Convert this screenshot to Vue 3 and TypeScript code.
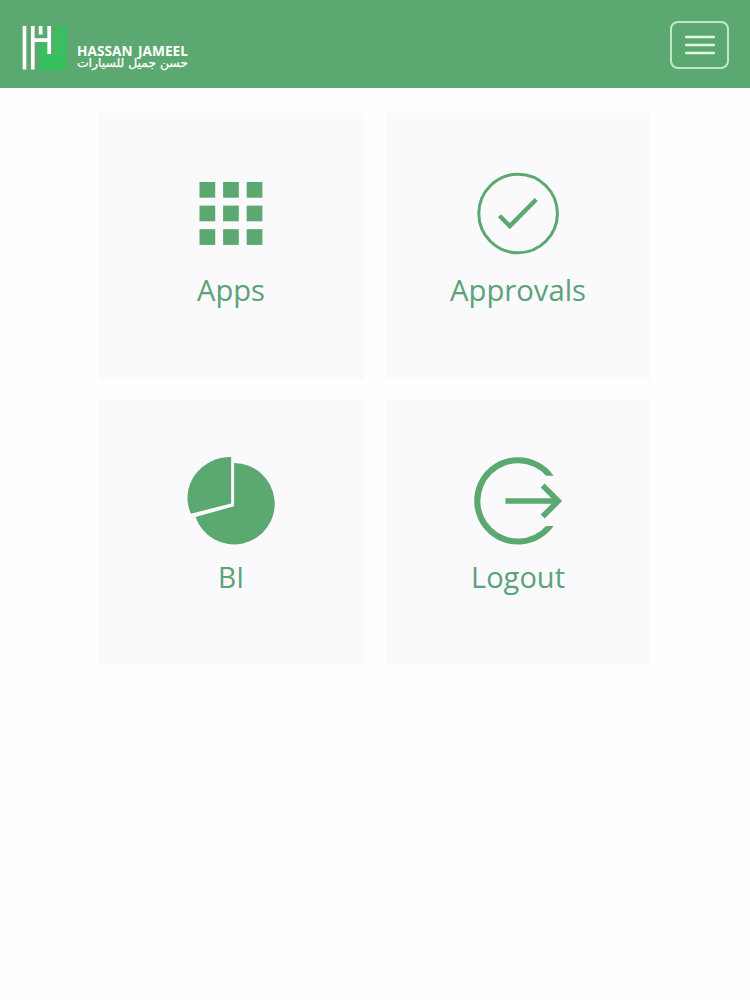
<script setup lang="ts">
type Icon = 'apps' | 'approvals' | 'bi' | 'logout'
interface Tile {
  label: string
  icon: Icon
  width: number
}

const tiles: Tile[] = [
  { label: 'Apps', icon: 'apps', width: 68 },
  { label: 'Approvals', icon: 'approvals', width: 136 },
  { label: 'BI', icon: 'bi', width: 26 },
  { label: 'Logout', icon: 'logout', width: 94 },
]
const steps = [0, 1, 2]
</script>

<template>
  <div class="page">
    <header class="bar">
      <div class="brand">
        <svg class="mark" viewBox="0 0 46 46" width="46" height="46">
          <path d="M18 19H25V30H33V1H44V44.5H18Z" fill="#3dbb60" />
          <path d="M42.2 1V42.5H18M34.8 1V34.5H22M20.8 19V35" fill="none" stroke="#2fc658" stroke-width="3.8" />
          <path d="M38.5 1V30" stroke="#4fb16b" stroke-width="2.5" />
          <path d="M2.5 1V44.5M10.8 1V44.5M27.2 1V29M18.6 1V9.5M10.8 15.2H27.2" fill="none" stroke="#fff" stroke-width="3.7" />
        </svg>
        <div class="names">
          <svg width="113" height="40" viewBox="0 0 113 40">
            <text class="latin" x="1" y="22.8" textLength="111" lengthAdjust="spacingAndGlyphs">HASSAN JAMEEL</text>
            <text class="arabic" x="1" y="34" textLength="111" lengthAdjust="spacingAndGlyphs">حسن جميل للسيارات</text>
          </svg>
        </div>
      </div>
      <button class="menu" type="button" aria-label="Menu">
        <svg width="30" height="20" viewBox="0 0 30 20">
          <path d="M1.2 2H28.8M1.2 10H28.8M1.2 18H28.8" stroke="#e3fae6" stroke-width="2.6" stroke-linecap="round" />
        </svg>
      </button>
    </header>
    <main class="grid">
      <a v-for="tile in tiles" :key="tile.label" class="tile">
        <svg class="icon" viewBox="0.5 -0.5 100 100" width="100" height="100">
          <template v-if="tile.icon === 'apps'">
            <template v-for="r in steps" :key="r">
              <rect v-for="c in steps" :key="c" :x="18 + c * 23.6" :y="18.5 + r * 23.6" width="15.7" height="15.7" />
            </template>
          </template>
          <template v-else-if="tile.icon === 'approvals'">
            <circle class="stroke" cx="49.6" cy="50" r="39.3" stroke-width="3" />
            <path class="stroke" d="M31 52.3L41.3 62.6L67.7 36" stroke-width="4.4" />
          </template>
          <template v-else-if="tile.icon === 'bi'">
            <path d="M52.6 12.6A40.7 40.7 0 1 1 14 66.5L52.6 55.7Z" />
            <path d="M49.6 6.5A43 40.8 0 0 0 9.4 63.2L49.6 52.9Z" />
          </template>
          <template v-else>
            <path d="M85.1 25.2A43.7 43.7 0 1 0 85.1 75.6H77.6A37.7 37.7 0 1 1 77.6 25.2Z" />
            <path class="stroke" d="M37 50.5H89M74.2 35L89.7 50.5L74.2 66" stroke-width="5.6" />
          </template>
        </svg>
        <svg class="label" viewBox="0 0 160 44" width="160" height="44">
          <text x="79" y="31.5" text-anchor="middle" :textLength="tile.width" lengthAdjust="spacingAndGlyphs">{{ tile.label }}</text>
        </svg>
      </a>
    </main>
  </div>
</template>

<style>
body {
  background: #fefefe;
}
</style>

<style scoped>
.page {
  height: 1000px;
  overflow: hidden;
  background: #fefefe;
  font-family: 'Open Sans', 'Noto Sans', sans-serif;
}
.bar {
  box-sizing: border-box;
  height: 88px;
  padding: 21px 21px 0 22px;
  display: flex;
  justify-content: space-between;
  align-items: flex-start;
  background: #5ba871;
}
.brand {
  display: flex;
  padding-top: 4px;
}
.mark {
  display: block;
}
.names {
  padding: 8px 0 0 8px;
}
.names svg {
  display: block;
  fill: #fff;
}
.latin {
  font: 700 13.6px 'Open Sans', sans-serif;
  word-spacing: 2px;
}
.arabic {
  font: 400 11.5px 'DejaVu Sans', sans-serif;
  stroke: #fff;
  stroke-width: 0.25px;
}
.menu {
  box-sizing: border-box;
  width: 59px;
  height: 48px;
  padding: 0;
  border: 2px solid #c2e8ca;
  border-radius: 8px;
  background: none;
  display: flex;
  align-items: center;
  justify-content: center;
}
.grid {
  display: grid;
  grid-template-columns: 265px 265px;
  grid-template-rows: 266px 265px;
  gap: 21px 22px;
  padding: 25px 0 0 99px;
}
.tile {
  display: flex;
  flex-direction: column;
  align-items: center;
  background: #faf9fc;
  padding-top: 50px;
  box-sizing: border-box;
}
.icon {
  display: block;
  fill: #5ba871;
}
.stroke {
  fill: none;
  stroke: #5ba871;
}
.label {
  display: block;
  margin-top: 6px;
  fill: #5ba27a;
  font-size: 29px;
}
</style>
